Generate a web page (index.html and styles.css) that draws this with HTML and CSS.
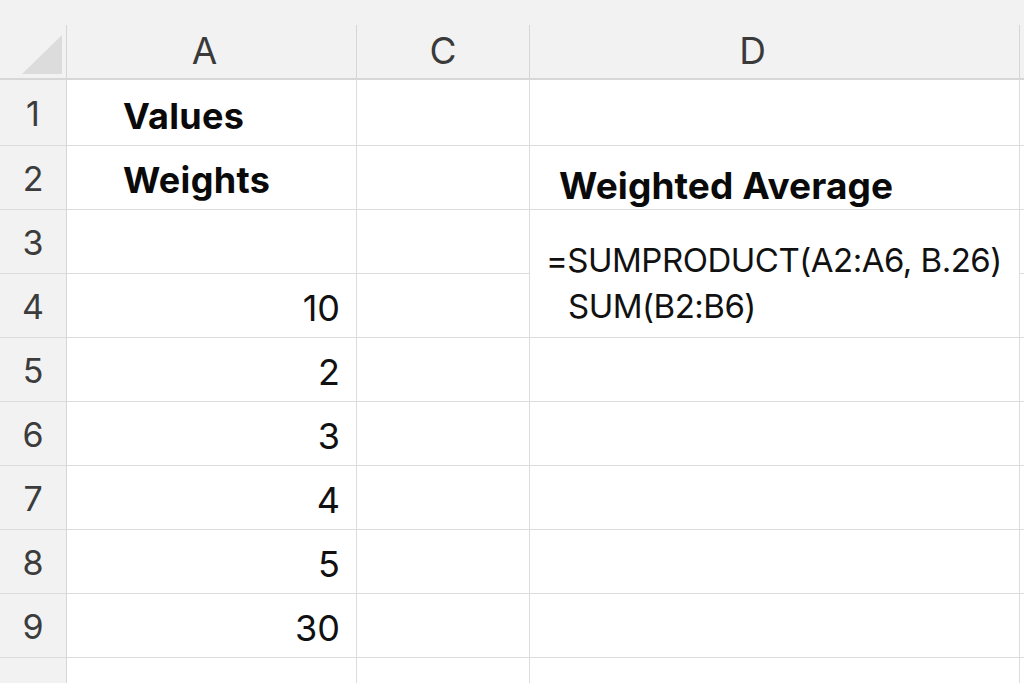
FILE: index.html
```html
<!DOCTYPE html>
<html>
<head>
<meta charset="utf-8">
<link rel="stylesheet" href="styles.css">
</head>
<body>
<div class="sheet">
  <div class="colheads">
    <div class="ch corner">
      <svg class="tri" width="40" height="39" viewBox="0 0 40 39"><polygon points="0,39 40,39 40,0" fill="#dcdcdc"/></svg>
    </div>
    <div class="ch col-a">A</div>
    <div class="ch col-c">C</div>
    <div class="ch col-d">D</div>
    <div class="ch col-x"></div>
  </div>
  <div class="grid">
    <div class="rh r1">1</div><div class="c label r1">Values</div><div class="c r1"></div><div class="c r1"></div><div class="c last r1"></div>
    <div class="rh">2</div><div class="c label">Weights</div><div class="c"></div><div class="c title">Weighted Average</div><div class="c last"></div>
    <div class="rh">3</div><div class="c"></div><div class="c"></div><div class="c formula"><div class="f1">=SUMPRODUCT(A2:A6, B.26)</div><div class="f2">SUM(B2:B6)</div></div><div class="c last"></div>
    <div class="rh">4</div><div class="c num">10</div><div class="c"></div><div class="c last"></div>
    <div class="rh">5</div><div class="c num">2</div><div class="c"></div><div class="c"></div><div class="c last"></div>
    <div class="rh">6</div><div class="c num">3</div><div class="c"></div><div class="c"></div><div class="c last"></div>
    <div class="rh">7</div><div class="c num">4</div><div class="c"></div><div class="c"></div><div class="c last"></div>
    <div class="rh">8</div><div class="c num">5</div><div class="c"></div><div class="c"></div><div class="c last"></div>
    <div class="rh">9</div><div class="c num">30</div><div class="c"></div><div class="c"></div><div class="c last"></div>
    <div class="rh end"></div><div class="c end"></div><div class="c end"></div><div class="c end"></div><div class="c last end"></div>
  </div>
</div>
</body>
</html>
```
FILE: styles.css
```css
* { box-sizing: border-box; }
html, body { margin: 0; padding: 0; background: #ffffff; }
body { font-family: Inter, "Noto Sans", sans-serif; color: #111; width: 1024px; height: 683px; overflow: hidden; }

.sheet { width: 1024px; height: 683px; display: flex; flex-direction: column; }

.colheads {
  display: flex;
  height: 80px;
  padding-top: 25px;
  background: #f2f2f2;
  border-bottom: 2px solid #d7d7d7;
}
.ch {
  height: 53px;
  border-right: 1px solid #d6d6d6;
  display: flex;
  align-items: center;
  justify-content: center;
  font-size: 37px;
  color: #3a3a3a;
  font-weight: 400;
  padding-bottom: 2px;
}
.corner { width: 67px; position: relative; }
.tri { position: absolute; left: 22px; top: 10px; }
.col-a { width: 290px; padding-right: 14px; }
.col-c { width: 173px; }
.col-d { width: 490px; padding-right: 44px; }
.col-x { flex: 1; border-right: none; }

.grid {
  flex: 1;
  display: grid;
  grid-template-columns: 67px 290px 173px 490px 1fr;
  grid-template-rows: 66px repeat(8, 64px) 1fr;
}
.rh {
  background: #f2f2f2;
  border-right: 1px solid #d6d6d6;
  border-bottom: 1px solid #dcdcdc;
  display: flex;
  align-items: center;
  justify-content: center;
  font-size: 34px;
  color: #3c3c3c;
  padding-top: 2px;
}
.c {
  border-right: 1px solid #dcdcdc;
  border-bottom: 1px solid #dcdcdc;
  display: flex;
  align-items: center;
}
.last { border-right: none; }
.end { border-bottom: none; }

.label {
  font-weight: 700;
  font-size: 36px;
  padding-left: 56px;
  padding-top: 4px;
  letter-spacing: 0.3px;
  color: #0a0a0a;
}
.r1.label { padding-top: 6px; }
.title {
  font-weight: 700;
  font-size: 37px;
  padding-left: 29px;
  padding-top: 16px;
  letter-spacing: 0.1px;
  color: #0a0a0a;
}
.num {
  justify-content: flex-end;
  padding-right: 16px;
  font-size: 36px;
  padding-top: 4px;
}
.formula {
  grid-row: span 2;
  flex-direction: column;
  align-items: flex-start;
  justify-content: flex-start;
  padding-left: 16px;
  padding-top: 27px;
  font-size: 33px;
  line-height: 46px;
  white-space: nowrap;
  letter-spacing: -0.5px;
}
.f2 { padding-left: 22px; }
```
